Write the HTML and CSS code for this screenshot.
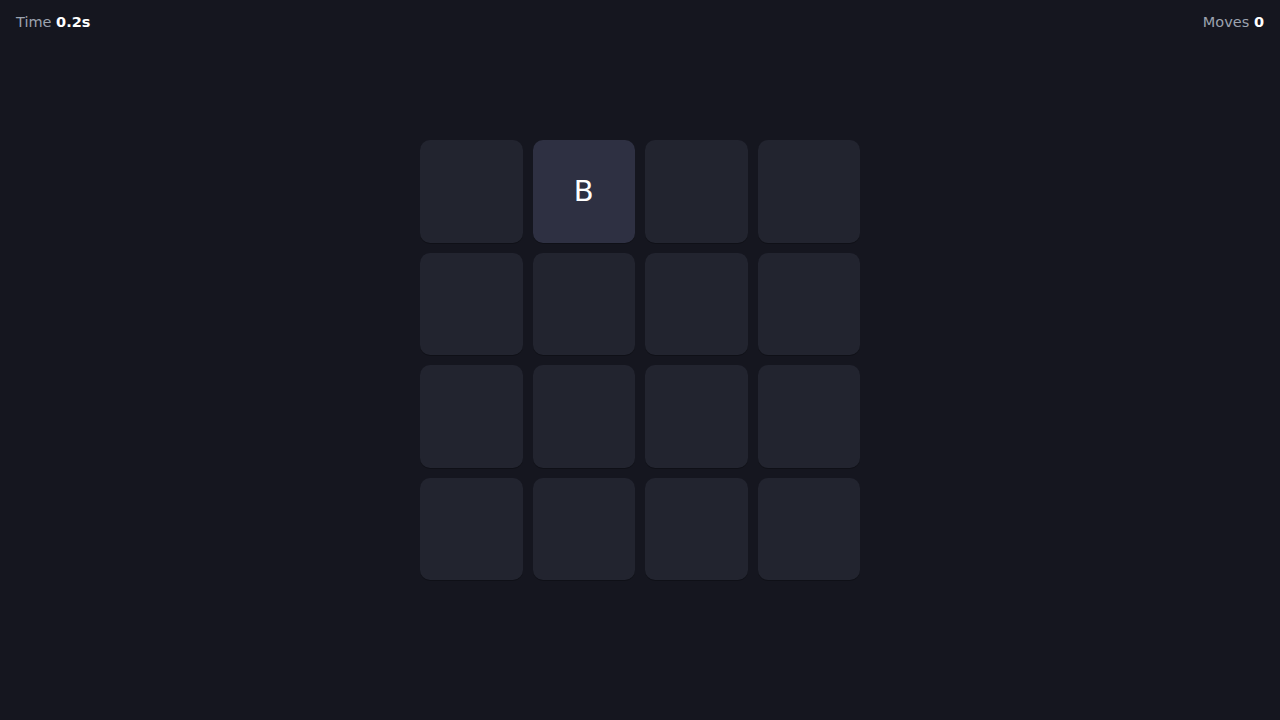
FILE: index.html
```html
<!DOCTYPE html>
<html>
<head>
<meta charset="utf-8">
<link rel="stylesheet" href="styles.css">
</head>
<body>
<div class="hud">
  <div class="stat">Time <b>0.2s</b></div>
  <div class="stat">Moves <b>0</b></div>
</div>
<main class="stage">
  <div class="board">
    <div class="tile"></div>
    <div class="tile open">B</div>
    <div class="tile"></div>
    <div class="tile"></div>
    <div class="tile"></div>
    <div class="tile"></div>
    <div class="tile"></div>
    <div class="tile"></div>
    <div class="tile"></div>
    <div class="tile"></div>
    <div class="tile"></div>
    <div class="tile"></div>
    <div class="tile"></div>
    <div class="tile"></div>
    <div class="tile"></div>
    <div class="tile"></div>
  </div>
</main>
</body>
</html>
```

FILE: styles.css
```css
html, body {
  margin: 0;
  height: 100%;
}
body {
  background: #15161f;
  font-family: "DejaVu Sans", sans-serif;
  color: #9ca3af;
  overflow: hidden;
  position: relative;
}
.hud {
  position: absolute;
  top: 0;
  left: 0;
  right: 0;
  display: flex;
  justify-content: space-between;
  padding: 13px 16px;
  font-size: 14.5px;
  line-height: 18px;
}
.stat b {
  color: #ffffff;
  font-weight: bold;
}
.stage {
  height: 100%;
  display: flex;
  align-items: center;
  justify-content: center;
}
.board {
  display: grid;
  grid-template-columns: repeat(4, 102.5px);
  grid-template-rows: repeat(4, 102.5px);
  gap: 10px;
}
.tile {
  background: #22242f;
  border-radius: 10px;
  box-shadow: 0 1px 0 rgba(0,0,0,0.25);
  display: flex;
  align-items: center;
  justify-content: center;
  color: #ffffff;
  font-size: 29px;
}
.tile.open {
  background: #2e3042;
}
```
